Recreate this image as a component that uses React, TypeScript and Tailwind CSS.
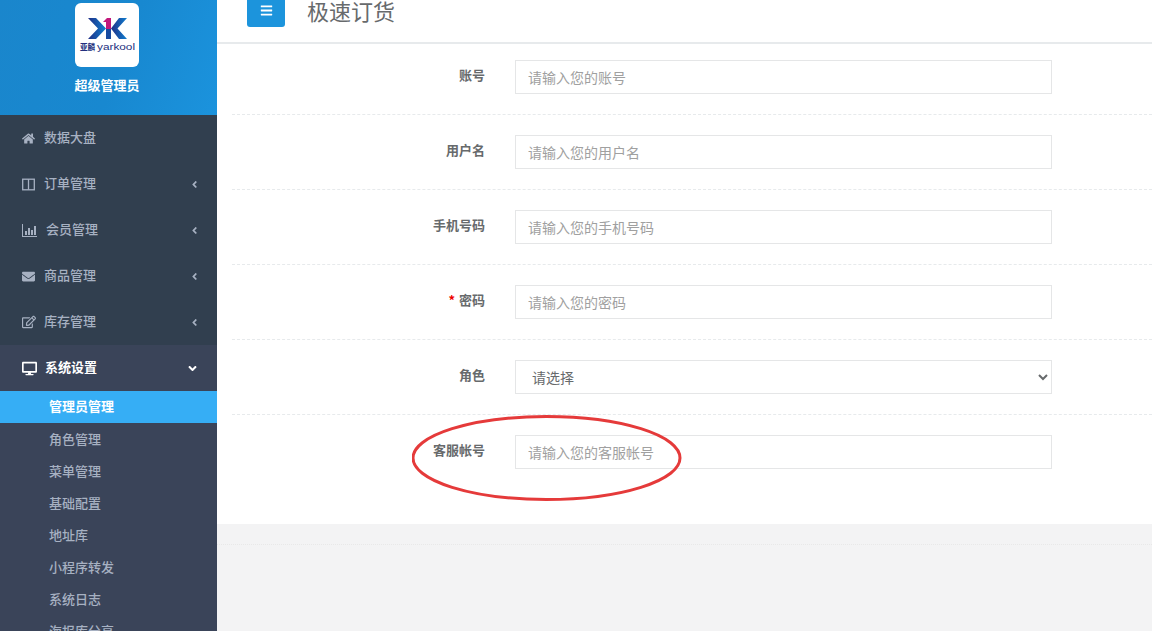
import {
  FaAngleDown,
  FaAngleLeft,
  FaBars,
  FaDesktop,
  FaEnvelope,
  FaHome,
  FaRegEdit,
} from "react-icons/fa";

const font = "font-['Noto_Sans_CJK_SC','Liberation_Sans',sans-serif]";

function ColumnsIcon() {
  return (
    <svg viewBox="0 0 13 13" className="w-[13px] h-[13px]" fill="none" stroke="currentColor" strokeWidth="1.300">
      <rect x="0.700" y="1.200" width="11.600" height="10.600" />
      <path d="M6.500 1.200v10.600" />
    </svg>
  );
}

function ChartIcon() {
  return (
    <svg viewBox="0 0 15 13" className="w-[15px] h-[13px]" fill="currentColor">
      <path d="M0 0h1v12h14v1H0z" />
      <path d="M3 7h2v4H3zM6 4h2v7H6zM9 6h2v5H9zM12 2h2v9h-2z" />
    </svg>
  );
}

const menu = [
  { name: "数据大盘", icon: <FaHome size={13} />, w: "w-[22px]", arrow: false },
  { name: "订单管理", icon: <ColumnsIcon />, w: "w-[22px]", arrow: true },
  { name: "会员管理", icon: <ChartIcon />, w: "w-[24px]", arrow: true },
  { name: "商品管理", icon: <FaEnvelope size={13} />, w: "w-[22px]", arrow: true },
  { name: "库存管理", icon: <FaRegEdit size={14} />, w: "w-[22px]", arrow: true },
];

const subMenu = ["角色管理", "菜单管理", "基础配置", "地址库", "小程序转发", "系统日志", "海报库分享"];

const fields = [
  { label: "账号", placeholder: "请输入您的账号" },
  { label: "用户名", placeholder: "请输入您的用户名" },
  { label: "手机号码", placeholder: "请输入您的手机号码" },
  { label: "密码", placeholder: "请输入您的密码", required: true },
  { label: "角色", select: true },
  { label: "客服帐号", placeholder: "请输入您的客服帐号" },
];

function Logo() {
  return (
    <svg viewBox="0 0 64 64" className="w-16 h-16">
      <defs>
        <linearGradient id="lg" x1="0" x2="1">
          <stop offset="0" stopColor="#1f2f86" />
          <stop offset="1" stopColor="#0f7fd0" />
        </linearGradient>
      </defs>
      <path d="M13 15h8l10 10.500L21 36h-8l10-10.500z" fill="url(#lg)" />
      <path d="M52 15h-8l-8 10.500L44 36h8L42.500 25.500z" fill="url(#lg)" />
      <path d="M28 19l4-4h4v11h-5v-7z" fill="#c2187c" />
      <path d="M31 26h5v10h-5z" fill="#174a9f" />
      <text x="5" y="46.500" fontSize="7.500" fontWeight="700" fill="#232f7e" fontFamily="Noto Sans CJK SC">
        亚麟
      </text>
      <text x="22" y="46.500" fontSize="9.500" fill="#232f7e" fontFamily="Liberation Sans" textLength="38" lengthAdjust="spacingAndGlyphs">
        yarkool
      </text>
    </svg>
  );
}

function Sidebar() {
  return (
    <div className="w-[217px] shrink-0 bg-[#313f4f] flex flex-col">
      <div className="h-[115px] shrink-0 flex flex-col items-center pt-[3px] pr-[3px] bg-[linear-gradient(110deg,#1a86cc,#1888d0_55%,#1b93dd)]">
        <div className="w-16 h-16 bg-white rounded-md">
          <Logo />
        </div>
        <div className="mt-[8px] text-[13px] leading-[20px] font-bold text-white">超级管理员</div>
      </div>
      {menu.map((m) => (
        <div key={m.name} className="h-[46px] shrink-0 flex items-center pl-[22px] pr-[17px] text-[#a7b1c2]">
          <span className={`${m.w} shrink-0`}>{m.icon}</span>
          <span className="text-[13px] font-medium mb-[2px]">{m.name}</span>
          {m.arrow && <FaAngleLeft size={11} className="ml-auto" />}
        </div>
      ))}
      <div className="bg-[#3a4459] flex-1">
        <div className="h-[46px] flex items-center pl-[22px] pr-[18px] text-white">
          <FaDesktop size={15} className="mr-2" />
          <span className="text-[13px] font-bold mb-[2px]">系统设置</span>
          <FaAngleDown size={13} className="ml-auto" />
        </div>
        <div className="h-8 flex items-center pl-[49px] pb-[2px] bg-[#36aef5] text-white text-[13px] font-bold">管理员管理</div>
        {subMenu.map((s) => (
          <div key={s} className="h-8 flex items-center pl-[49px] pb-px text-[#a7b1c2] text-[13px] font-medium">
            {s}
          </div>
        ))}
      </div>
    </div>
  );
}

function App() {
  return (
    <div className={`h-[631px] overflow-hidden flex bg-[#f3f3f4] ${font}`}>
      <Sidebar />
      <div className="flex-1 min-w-0 flex flex-col">
        <div className="h-11 shrink-0 bg-white border-b-2 border-[#e7eaec] flex items-start pl-[30px]">
          <div className="mt-[-7px] w-[38px] h-[34px] rounded-[3px] bg-[#1c94dc] text-white flex items-center justify-center">
            <FaBars size={13} />
          </div>
          <h2 className="ml-[22px] mt-[-1px] text-[22px] leading-[22px] font-normal text-[#676a6c]">极速订货</h2>
        </div>
        <div className="relative bg-white h-[480px] shrink-0 pl-[15px] pt-[16px]">
          {fields.map((f, i) => (
            <div
              key={f.label}
              className={`flex items-center ${i > 0 ? "pt-5" : ""} ${
                i < 5 ? "pb-5 border-b border-dashed border-[#e7eaec]" : ""
              }`}
            >
              <label className="w-[253px] shrink-0 text-right text-[13px] font-bold text-[#676a6c] mb-[4px]">
                {f.required && <span className="text-[#e00] mr-1">*</span>}
                {f.label}
              </label>
              {f.select ? (
                <select className="ml-[30px] w-[537px] h-[34px] bg-white border border-[#e5e6e7] px-3 text-sm text-[#676a6c]">
                  <option>请选择</option>
                </select>
              ) : (
                <input
                  placeholder={f.placeholder}
                  className="ml-[30px] w-[537px] h-[34px] bg-white border border-[#e5e6e7] px-3 text-sm placeholder:text-[#a0a0a0]"
                />
              )}
            </div>
          ))}
          <svg className="absolute left-[195px] top-[370px] w-[272px] h-[88px]" viewBox="0 0 272 88">
            <ellipse cx="134.500" cy="44" rx="133.500" ry="41.500" fill="none" stroke="#e53a3a" strokeWidth="3" />
          </svg>
        </div>
        <div className="mt-5 border-t border-dotted border-[#e8e8e8]" />
      </div>
    </div>
  );
}

export default App;
